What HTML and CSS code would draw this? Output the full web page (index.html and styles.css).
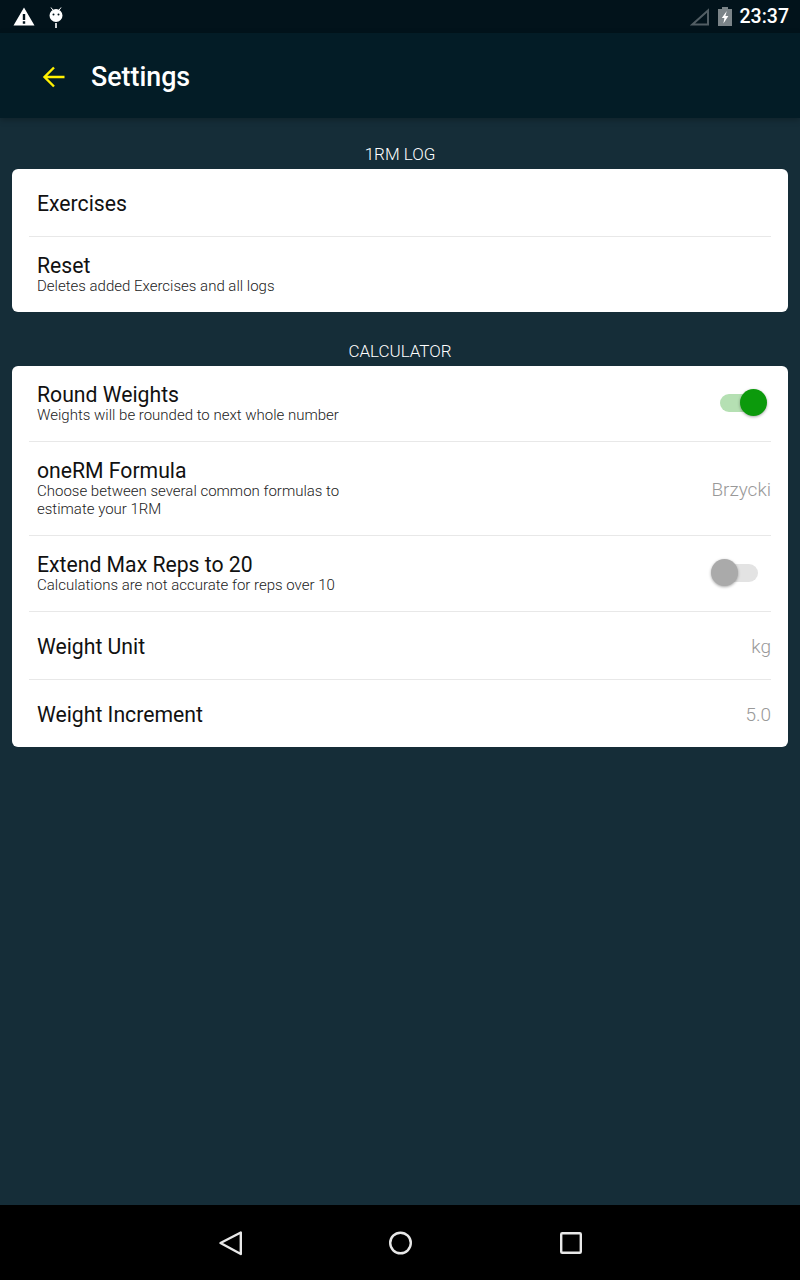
FILE: index.html
```html
<!DOCTYPE html>
<html lang="en">
  <head>
    <meta charset="UTF-8" />
    <meta name="viewport" content="width=device-width, initial-scale=1.0" />
    <title>Settings</title>
    <link rel="stylesheet" href="styles.css">
  </head>
  <body>
    <div class="status-bar">
      <div class="status-group">
        <svg class="icon-warning" width="22" height="20" viewBox="0 0 22 20">
          <path fill="#fff" fill-rule="evenodd" d="M11 .5 21.500 18.500H.5ZM9.800 7v6h2.400V7ZM9.800 14.300v2.400h2.400v-2.400Z"/>
        </svg>
        <svg class="icon-debug" width="16" height="22" viewBox="0 0 16 22">
          <path stroke="#fff" stroke-width="1" d="M3 1.500 4.800 4M13 1.500 11.200 4"/>
          <path fill="#fff" fill-rule="evenodd" d="M8 3a6.500 6.500 0 1 1 0 13A6.500 6.500 0 0 1 8 3ZM5.500 7.500a1 1 0 1 0 0 2 1 1 0 0 0 0-2ZM10.500 7.500a1 1 0 1 0 0 2 1 1 0 0 0 0-2Z"/>
          <rect x="7.200" y="17" width="1.600" height="5" fill="#fff"/>
        </svg>
      </div>
      <div class="status-group">
        <svg class="icon-signal" width="19" height="18" viewBox="0 0 19 18">
          <path fill="none" stroke="#525e64" stroke-width="2" d="M18 2.400V16.500H2.400Z"/>
        </svg>
        <svg class="icon-battery" width="14" height="19" viewBox="0 0 14 19">
          <path fill="#7b8488" d="M4 0H10V2H14V19H0V2H4Z"/>
          <path fill="#fff" d="M8.800 4 3.800 11H6.400L5.400 16.500 10.400 9H7.400Z"/>
        </svg>
        <span class="clock">23:37</span>
      </div>
    </div>

    <div class="app-bar">
      <svg class="back-arrow" width="24" height="24" viewBox="0 0 24 24">
        <path fill="none" stroke="#fff000" stroke-width="2.400" d="M22.500 12H3M12 2.500 2.500 12 12 21.500"/>
      </svg>
      <h1>Settings</h1>
    </div>

    <div class="content">
      <h2 class="section-title">1RM LOG</h2>
      <div class="card">
        <div class="row row-exercises">
          <div class="row-text">
            <div class="row-title">Exercises</div>
          </div>
        </div>
        <div class="row row-reset">
          <div class="row-text">
            <div class="row-title">Reset</div>
            <div class="row-sub">Deletes added Exercises and all logs</div>
          </div>
        </div>
      </div>

      <h2 class="section-title section-second">CALCULATOR</h2>
      <div class="card">
        <div class="row row-round">
          <div class="row-text">
            <div class="row-title">Round Weights</div>
            <div class="row-sub">Weights will be rounded to next whole number</div>
          </div>
          <div class="switch switch-on"><span class="knob"></span></div>
        </div>
        <div class="row row-formula">
          <div class="row-text">
            <div class="row-title">oneRM Formula</div>
            <div class="row-sub">Choose between several common formulas to<br>estimate your 1RM</div>
          </div>
          <div class="row-value">Brzycki</div>
        </div>
        <div class="row row-extend">
          <div class="row-text">
            <div class="row-title">Extend Max Reps to 20</div>
            <div class="row-sub">Calculations are not accurate for reps over 10</div>
          </div>
          <div class="switch"><span class="knob"></span></div>
        </div>
        <div class="row row-plain">
          <div class="row-text">
            <div class="row-title">Weight Unit</div>
          </div>
          <div class="row-value">kg</div>
        </div>
        <div class="row row-plain">
          <div class="row-text">
            <div class="row-title">Weight Increment</div>
          </div>
          <div class="row-value">5.0</div>
        </div>
      </div>
    </div>

    <div class="nav-bar">
      <svg width="26" height="26" viewBox="0 0 26 26">
        <path fill="none" stroke="#e8e8e8" stroke-width="2.400" stroke-linejoin="round" d="M23.800 2.500V24L3.500 13Z"/>
      </svg>
      <svg width="26" height="26" viewBox="0 0 26 26">
        <circle cx="13.500" cy="13" r="10.300" fill="none" stroke="#e8e8e8" stroke-width="2.400"/>
      </svg>
      <svg width="26" height="26" viewBox="0 0 26 26">
        <rect x="4.200" y="3.200" width="19.600" height="19.600" rx="1" fill="none" stroke="#e8e8e8" stroke-width="2.400"/>
      </svg>
    </div>
  </body>
</html>
```

FILE: styles.css
```css
* {
  box-sizing: border-box;
}

body {
  margin: 0;
  width: 800px;
  height: 1280px;
  display: flex;
  flex-direction: column;
  font-family: Roboto, "Liberation Sans", sans-serif;
  background-color: #152d38;
}

.status-bar {
  height: 33px;
  flex: none;
  display: flex;
  justify-content: space-between;
  align-items: center;
  padding: 0 11px 0 13px;
  background-color: #02131b;
}

.status-group {
  display: flex;
  align-items: center;
}

.icon-debug {
  margin-left: 13px;
}

.icon-battery {
  margin-left: 9px;
}

.clock {
  margin-left: 8px;
  font-size: 19.500px;
  font-weight: 500;
  color: #fff;
}

.app-bar {
  height: 85px;
  flex: none;
  display: flex;
  align-items: center;
  padding: 2px 0 0 42px;
  background-color: #031c26;
  box-shadow: 0 2px 6px rgba(0, 0, 0, 0.25);
}

.app-bar h1 {
  margin: 0 0 0 25px;
  font-size: 26.800px;
  font-weight: 500;
  color: #fff;
}

.content {
  flex: 1;
  padding: 0 12px;
}

.section-title {
  margin: 0;
  height: 51px;
  padding-top: 25px;
  text-align: center;
  font-size: 17px;
  line-height: 22px;
  font-weight: 300;
  color: #fff;
}

.section-second {
  height: 54px;
  padding-top: 28px;
}

.card {
  background-color: #fff;
  border-radius: 6px;
  padding: 0 17px;
}

.row {
  display: flex;
  justify-content: space-between;
  align-items: center;
  padding-left: 8px;
  border-bottom: 1px solid #e8e8e8;
}

.row:last-child {
  border-bottom: none;
}

.row-exercises {
  height: 68px;
  padding-top: 3px;
}

.row-reset {
  height: 75px;
  padding-top: 1px;
}

.row-round {
  height: 76px;
  padding-top: 1px;
}

.row-formula {
  height: 94px;
  padding-top: 1px;
}

.row-extend {
  height: 76px;
  padding-top: 1px;
}

.row-plain {
  height: 68px;
  padding-top: 3px;
}

.row-plain:last-child {
  height: 67px;
}

.row-title {
  font-size: 21.200px;
  line-height: 22px;
  color: #111;
}

.row-sub {
  font-size: 15px;
  line-height: 18px;
  font-weight: 300;
  color: #222;
}

.row-value {
  font-size: 19px;
  font-weight: 300;
  color: #999;
}

.row-plain .row-value {
  margin-bottom: 2px;
}

.switch {
  position: relative;
  width: 38px;
  height: 18px;
  margin-right: 13px;
  margin-bottom: 2px;
  border-radius: 9px;
  background-color: #e3e3e3;
}

.switch .knob {
  position: absolute;
  left: -9px;
  top: -5px;
  width: 27px;
  height: 27px;
  border-radius: 50%;
  background-color: #aaa;
  box-shadow: 0 1px 3px rgba(0, 0, 0, 0.35);
}

.switch-on {
  background-color: #b5e0b3;
}

.switch-on .knob {
  left: 20px;
  background-color: #0c9a0c;
}

.nav-bar {
  height: 75px;
  flex: none;
  display: flex;
  justify-content: center;
  align-items: center;
  gap: 144px;
  background-color: #000;
}
```
